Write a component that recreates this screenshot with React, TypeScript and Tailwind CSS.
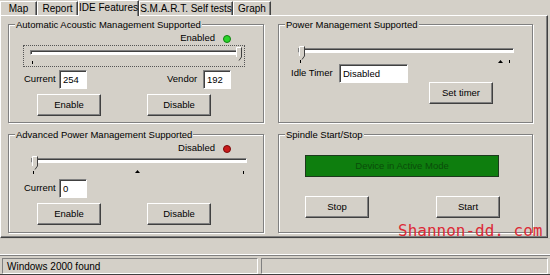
import React from "react";

const face = "bg-[#d4d0c8]";

function Btn({ label, className = "" }: { label: string; className?: string }) {
  return (
    <div
      className={`flex h-[22px] w-[64px] shrink-0 items-center justify-center border border-t-white border-l-white border-r-[#404040] border-b-[#404040] ${face} shadow-[inset_-1px_-1px_0_#808080] ${className}`}
    >
      {label}
    </div>
  );
}

function Field({ value, className = "" }: { value: string; className?: string }) {
  return (
    <div
      className={`h-[19px] shrink-0 border border-t-[#808080] border-l-[#808080] border-b-white border-r-white bg-white pl-[3px] leading-[17px] shadow-[inset_1px_1px_0_#404040] ${className}`}
    >
      {value}
    </div>
  );
}

function Group({ title, children }: { title: string; children: React.ReactNode }) {
  return (
    <fieldset className="h-[105px] min-w-0 border border-[#808080] p-0 shadow-[inset_1px_1px_0_#fff,1px_1px_0_#fff]">
      <legend className={`ml-[6px] px-[1px] leading-[13px] ${face}`}>{title}</legend>
      {children}
    </fieldset>
  );
}

function Thumb() {
  return (
    <svg width="6" height="14" viewBox="0 0 6 14" className="absolute">
      <path d="M0.5 0.5 H5 V10 L3 13.5 L0.5 10 Z" fill="#d4d0c8" />
      <path d="M0.5 10 V0.5 H5" fill="none" stroke="#fff" strokeWidth="1" />
      <path d="M5.5 0.5 V10 L3 13.5" fill="none" stroke="#404040" strokeWidth="1" />
    </svg>
  );
}

function Arrow() {
  return (
    <svg width="5" height="3" viewBox="0 0 5 3" className="absolute">
      <path d="M2.5 0 L5 3 H0 Z" fill="#000" />
    </svg>
  );
}

function Track({ width }: { width: number }) {
  return (
    <div
      style={{ width }}
      className="h-[5px] border border-t-[#808080] border-l-[#808080] border-b-white border-r-white bg-white shadow-[inset_1px_1px_0_#404040]"
    />
  );
}

function Led({ on }: { on: boolean }) {
  return (
    <span
      className={`ml-[8px] inline-block h-[8px] w-[8px] rounded-full border ${
        on ? "border-[#128012] bg-[#2ad42a]" : "border-[#7a0a0a] bg-[#c81a1a]"
      }`}
    />
  );
}

const tabs = [
  { label: "Map", w: "w-[37px]" },
  { label: "Report", w: "w-[41px]" },
  { label: "IDE Features", w: "w-[61px]", active: true },
  { label: "S.M.A.R.T. Self tests", w: "w-[94px]" },
  { label: "Graph", w: "w-[38px]" },
];

export default function App() {
  return (
    <div
      className={`relative flex h-[275px] w-[550px] flex-col overflow-hidden ${face} text-[9.5px] text-black`}
      style={{ fontFamily: '"Liberation Sans", Arial, sans-serif' }}
    >
      {/* tab strip */}
      <div className="flex h-[15px] items-end">
        {tabs.map((t) =>
          t.active ? (
            <div
              key={t.label}
              className={`relative z-10 -mb-[1px] flex h-[16px] ${t.w} items-start justify-center border-l border-t border-l-white border-t-white border-r border-r-[#404040] ${face} pt-[1px] text-[10px] leading-[12px] shadow-[inset_-1px_0_0_#808080]`}
            >
              {t.label}
            </div>
          ) : (
            <div
              key={t.label}
              className={`flex h-[14px] ${t.w} items-center justify-center border-l border-t border-l-white border-t-white border-r border-r-[#404040] text-[10px] shadow-[inset_-1px_0_0_#808080]`}
            >
              {t.label}
            </div>
          )
        )}
      </div>

      {/* panel */}
      <div className="h-[223px] w-[548px] border border-t-white border-l-white border-r-[#404040] border-b-[#404040] shadow-[inset_-1px_-1px_0_#808080]">
        <div className="grid grid-cols-[256px_255px] grid-rows-[105px_105px] gap-x-[14px] gap-y-[5px] pl-[7px] pt-[2px]">
          {/* AAM */}
          <Group title="Automatic Acoustic Management Supported">
            <div className="mt-[1px] flex h-[13px] items-center justify-end pr-[32px]">
              Enabled
              <Led on />
            </div>
            <div className="relative ml-[14px] h-[22px] w-[222px] border border-dotted border-[#555]">
              <div className="ml-[6px] mt-[4px]">
                <Track width={211} />
              </div>
              <div className="left-[212px] top-[1px] absolute">
                <Thumb />
              </div>
              <div className="absolute left-[8px] top-[15px] h-[3px] w-[1px] bg-black" />
            </div>
            <div className="mt-[3px] flex items-center">
              <span className="ml-[15px] w-[35px]">Current</span>
              <Field value="254" className="w-[28px]" />
              <span className="ml-[80px] w-[36px]">Vendor</span>
              <Field value="192" className="w-[28px]" />
            </div>
            <div className="mt-[5px] flex gap-[46px] pl-[28px]">
              <Btn label="Enable" />
              <Btn label="Disable" />
            </div>
          </Group>

          {/* Power management */}
          <Group title="Power Management Supported">
            <div className="relative ml-[19px] mt-[17px] h-[15px] w-[216px]">
              <Track width={216} />
              <div className="absolute left-[1px] -top-[2px]">
                <Thumb />
              </div>
              <div className="absolute left-[2px] top-[12px] h-[3px] w-[1px] bg-black" />
              <div className="absolute left-[200px] top-[12px]">
                <Arrow />
              </div>
              <div className="absolute left-[211px] top-[12px] h-[3px] w-[1px] bg-black" />
            </div>
            <div className="mt-[1px] flex items-center">
              <span className="ml-[12px] w-[48px]">Idle Timer</span>
              <Field value="Disabled" className="w-[69px]" />
            </div>
            <div className="-mt-[1px] pl-[150px]">
              <Btn label="Set timer" />
            </div>
          </Group>

          {/* APM */}
          <Group title="Advanced Power Management Supported">
            <div className="mt-[1px] flex h-[13px] items-center justify-end pr-[32px]">
              Disabled
              <Led on={false} />
            </div>
            <div className="relative ml-[22px] mt-[3px] h-[16px] w-[216px]">
              <Track width={216} />
              <div className="absolute left-[1px] -top-[2px]">
                <Thumb />
              </div>
              <div className="absolute left-[2px] top-[13px] h-[3px] w-[1px] bg-black" />
              <div className="absolute left-[104px] top-[12px]">
                <Arrow />
              </div>
              <div className="absolute left-[212px] top-[13px] h-[3px] w-[1px] bg-black" />
            </div>
            <div className="mt-[5px] flex items-center">
              <span className="ml-[15px] w-[35px]">Current</span>
              <Field value="0" className="w-[28px]" />
            </div>
            <div className="mt-[5px] flex gap-[46px] pl-[28px]">
              <Btn label="Enable" />
              <Btn label="Disable" />
            </div>
          </Group>

          {/* Spindle */}
          <Group title="Spindle Start/Stop">
            <div className="ml-[26px] mt-[14px] flex h-[22px] w-[194px] items-center justify-center border border-[#1d3a1d] bg-[#0e7e0e] text-[#0a4d0a]">
              Device in Active Mode
            </div>
            <div className="mt-[19px] flex gap-[67px] pl-[26px]">
              <Btn label="Stop" />
              <Btn label="Start" />
            </div>
          </Group>
        </div>
      </div>

      {/* empty band */}
      <div className="h-[18px] border-t border-t-[#c8c4bc] border-b border-b-[#808080] shadow-[inset_0_-1px_0_#fff]" />

      {/* status bar */}
      <div className="flex h-[19px] gap-[3px] px-[2px] pt-[2px]">
        <div className="flex h-[16px] w-[256px] items-center border border-t-[#808080] border-l-[#808080] border-b-white border-r-white pl-[4px] text-[10px]">
          Windows 2000 found
        </div>
        <div className="h-[16px] flex-1 border border-t-[#808080] border-l-[#808080] border-b-white border-r-white" />
      </div>
      <div className="absolute bottom-0 left-0 h-[1px] w-full bg-[#404040]" />

      {/* watermark */}
      <div
        className="absolute left-[398px] top-[221px] text-[16px] leading-[20px] text-[#dc2a36]"
        style={{ fontFamily: '"DejaVu Sans Mono", monospace' }}
      >
        Shannon-dd. com
      </div>
    </div>
  );
}
